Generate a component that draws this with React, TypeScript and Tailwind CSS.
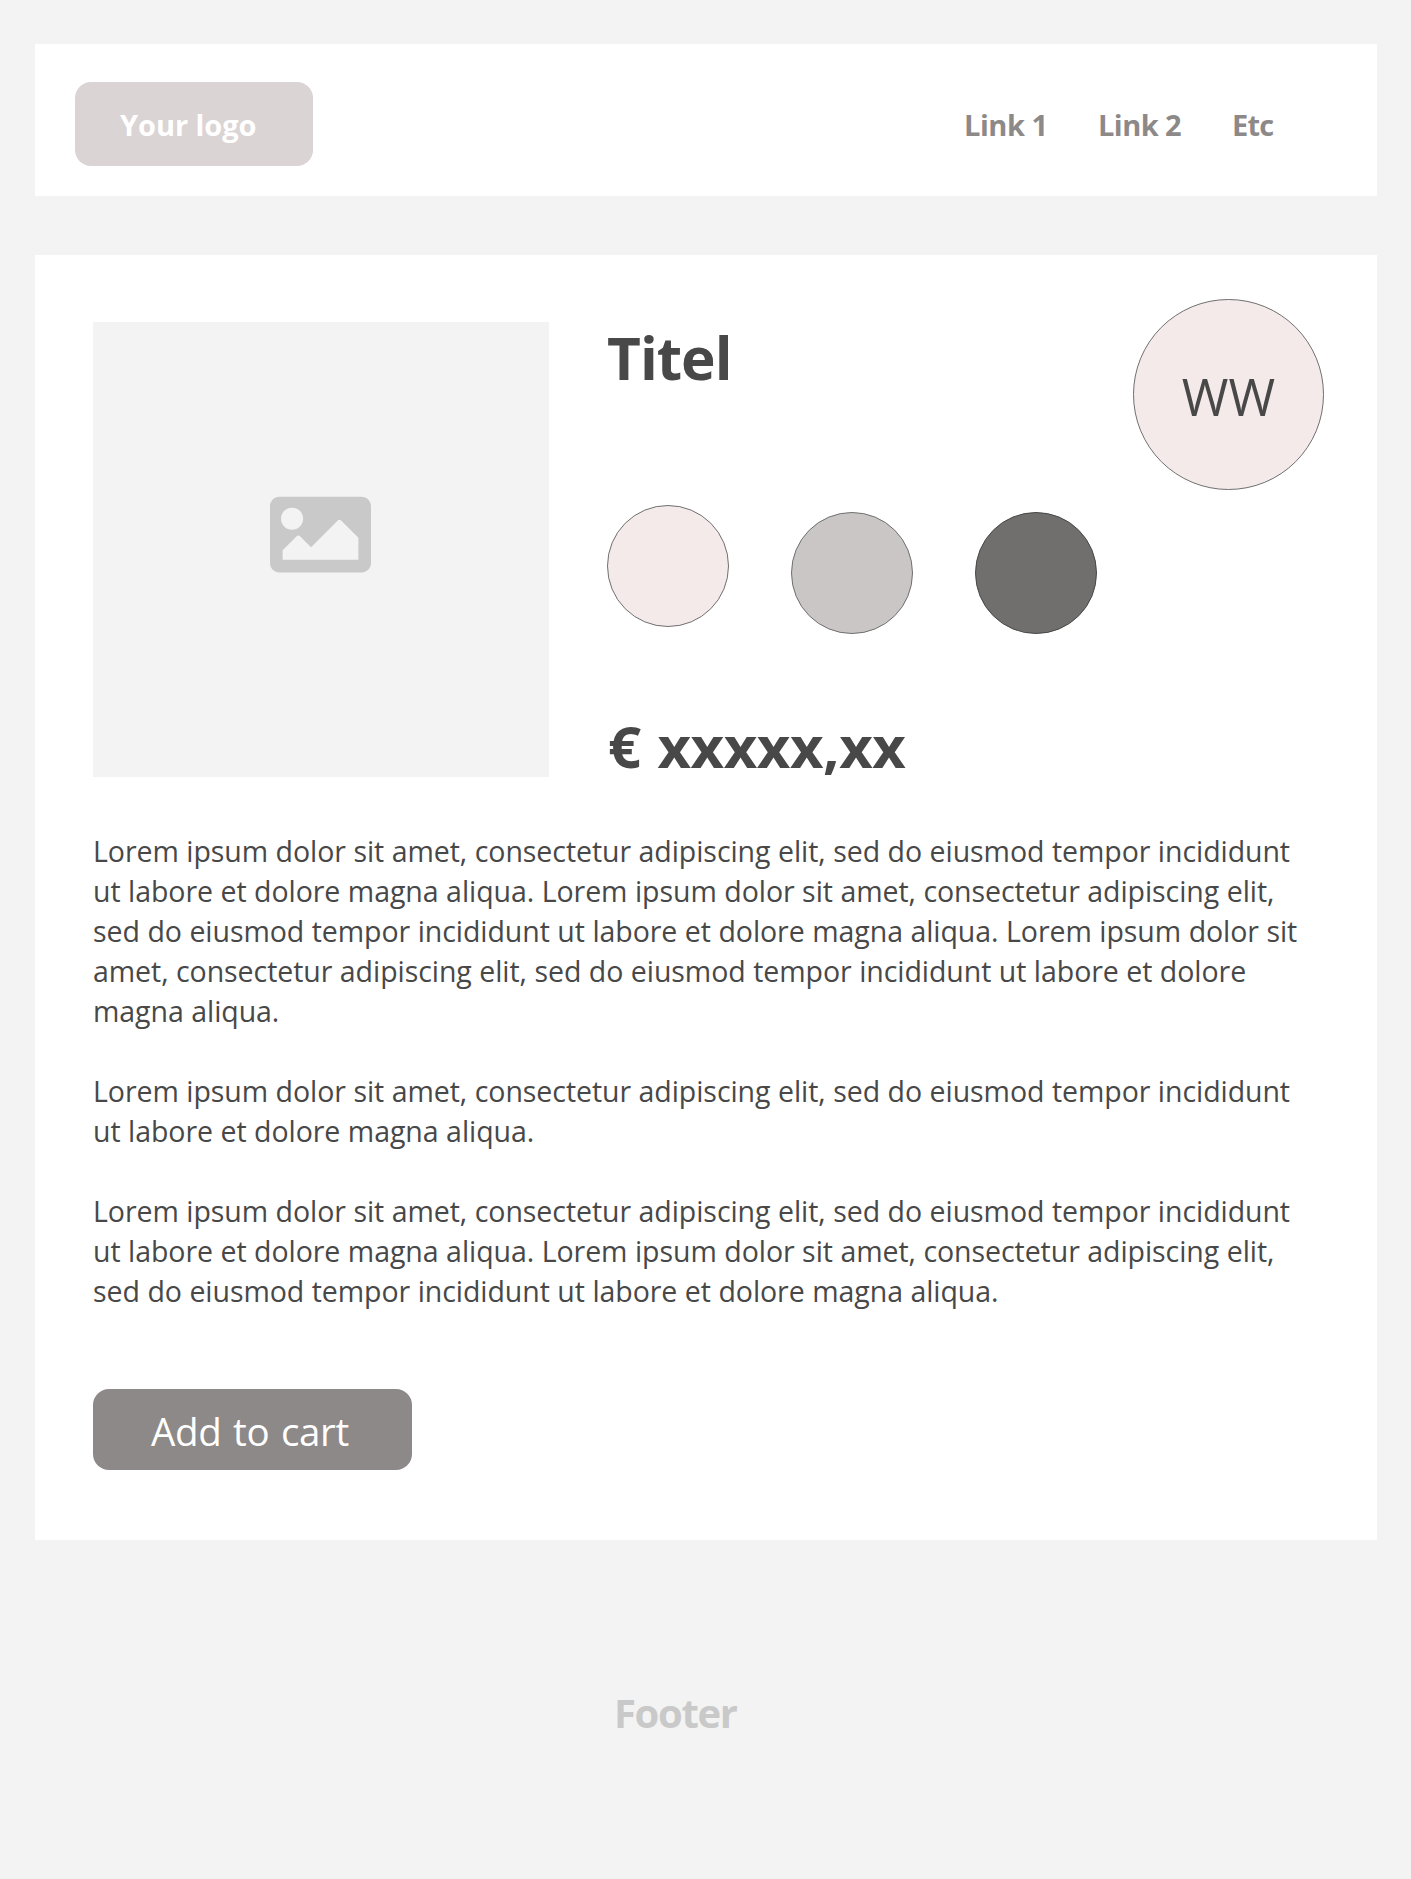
import { FaImage } from "react-icons/fa";

const links = [
  { label: "Link 1", tracking: "tracking-[-0.45px]" },
  { label: "Link 2", tracking: "tracking-[-0.55px]" },
  { label: "Etc", tracking: "tracking-[-0.8px]" },
];

const paragraphs = [
  [
    "Lorem ipsum dolor sit amet, consectetur adipiscing elit, sed do eiusmod tempor incididunt",
    "ut labore et dolore magna aliqua. Lorem ipsum dolor sit amet, consectetur adipiscing elit,",
    "sed do eiusmod tempor incididunt ut labore et dolore magna aliqua. Lorem ipsum dolor sit",
    "amet, consectetur adipiscing elit, sed do eiusmod tempor incididunt ut labore et dolore",
    "magna aliqua.",
  ],
  [
    "Lorem ipsum dolor sit amet, consectetur adipiscing elit, sed do eiusmod tempor incididunt",
    "ut labore et dolore magna aliqua.",
  ],
  [
    "Lorem ipsum dolor sit amet, consectetur adipiscing elit, sed do eiusmod tempor incididunt",
    "ut labore et dolore magna aliqua. Lorem ipsum dolor sit amet, consectetur adipiscing elit,",
    "sed do eiusmod tempor incididunt ut labore et dolore magna aliqua.",
  ],
];

function Header() {
  return (
    <header className="flex h-[152px] items-start bg-white pt-[38px] pl-10">
      <div className="h-[84px] w-[238px] rounded-2xl bg-[#dad4d4] pt-[23px] pl-[45px] text-[29px] leading-10 font-bold tracking-[-0.05px] text-white">
        Your logo
      </div>
      <nav className="mt-[23px] ml-auto flex w-[413px] text-[29px] leading-10 font-bold text-[#8d8988]">
        {links.map((l) => (
          <a key={l.label} className={`w-[134px] ${l.tracking}`}>
            {l.label}
          </a>
        ))}
      </nav>
    </header>
  );
}

function Product() {
  return (
    <section className="flex">
      <div className="flex h-[455px] w-[456px] bg-[#f3f3f3] pt-[162px] pl-[177px]">
        <FaImage className="size-[101px] text-[#c9c9c9]" />
      </div>
      <div className="ml-[58px] pt-[5px]">
        <h1 className="text-[58.5px] leading-[60px] font-bold tracking-[-1px]">Titel</h1>
        <div className="mt-[118px] flex gap-[62px]">
          <span className="size-[122px] rounded-full border border-[#707070] bg-[#f3eae9]" />
          <span className="mt-[7px] size-[122px] rounded-full border border-[#707070] bg-[#cac6c5]" />
          <span className="mt-[7px] size-[122px] rounded-full border border-[#484848] bg-[#706f6d]" />
        </div>
        <p className="mt-[82px] pl-px text-[58px] leading-[60px] font-bold tracking-[-0.4px] [word-spacing:2px]">
          € xxxxx,xx
        </p>
      </div>
      <div className="-mt-[23px] -mr-[5px] ml-auto flex size-[191px] items-center justify-center rounded-full border border-[#707070] bg-[#f3eae9] pt-1 text-[50.5px] leading-[60px]">
        WW
      </div>
    </section>
  );
}

export default function App() {
  return (
    <div className="min-h-[1879px] bg-[#f3f3f3] pt-11 pr-[34px] pl-[35px] font-['Open_Sans','Noto_Sans',sans-serif] text-[#484848]">
      <Header />
      <main className="mt-[59px] h-[1285px] bg-white px-[58px] pt-[67px]">
        <Product />
        <div className="mt-[54px] flex flex-col gap-10 text-[28.5px] leading-10 tracking-[-0.06px] whitespace-nowrap [word-spacing:0.2px]">
          {paragraphs.map((lines, i) => (
            <p key={i}>
              {lines.map((line) => (
                <span key={line} className="block">
                  {line}
                </span>
              ))}
            </p>
          ))}
        </div>
        <button className="mt-[78px] flex h-[81px] w-[319px] items-start rounded-2xl bg-[#8d8988] pt-[15px] pl-[58px] text-[38.5px] leading-[54px] tracking-[-0.35px] whitespace-nowrap text-white [word-spacing:2px]">
          Add to cart
        </button>
      </main>
      <footer className="mt-[146px] pl-[579px] text-[40px] leading-[54px] font-bold tracking-[-1.35px] text-[#c9c9c9]">
        Footer
      </footer>
    </div>
  );
}
